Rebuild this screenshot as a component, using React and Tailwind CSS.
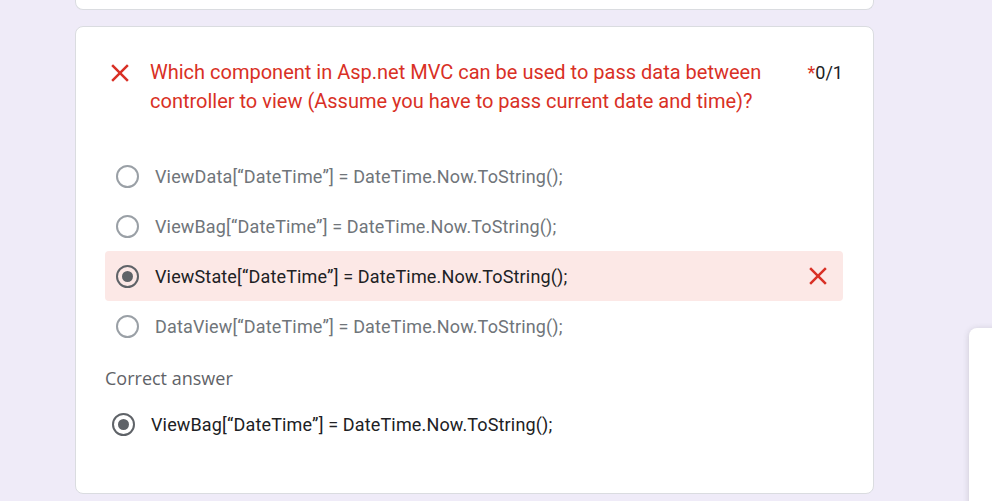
const font = { fontFamily: 'Roboto, "Liberation Sans", sans-serif' };
const labelFont = { fontFamily: '"Open Sans", Roboto, sans-serif' };

const CloseIcon = ({ className }) => (
  <svg viewBox="0 0 24 24" className={className} fill="currentColor">
    <path d="M19 6.41L17.59 5 12 10.59 6.41 5 5 6.41 10.59 12 5 17.59 6.41 19 12 13.41 17.59 19 19 17.59 13.41 12z" />
  </svg>
);

const Radio = ({ checked }) => (
  <div
    className={
      'w-[23px] h-[23px] rounded-full border-2 flex items-center justify-center shrink-0 ' +
      (checked ? 'border-[#5f6368]' : 'border-[#9aa0a6]')
    }
  >
    {checked && <div className="w-[11px] h-[11px] rounded-full bg-[#5f6368]" />}
  </div>
);

const options = [
  { label: 'ViewData[“DateTime”] = DateTime.Now.ToString();' },
  { label: 'ViewBag[“DateTime”] = DateTime.Now.ToString();' },
  { label: 'ViewState[“DateTime”] = DateTime.Now.ToString();', chosen: true },
  { label: 'DataView[“DateTime”] = DateTime.Now.ToString();' }
];

export default function App() {
  return (
    <div className="relative w-full h-[501px] overflow-hidden bg-[#efebf8]" style={font}>
      <div className="ml-[75px] w-[799px]">
        <div className="h-[10px] bg-white border border-t-0 border-[#dadce0] rounded-b-lg" />

        <div className="mt-[16px] h-[468px] bg-white border border-[#dadce0] rounded-lg pl-[29px] pr-[30px] pt-[31px]">
          <div className="flex items-start">
            <CloseIcon className="w-[30px] h-[30px] text-[#d93025] shrink-0" />
            <div className="ml-[15px] w-[630px] text-[20px] leading-[29px] text-[#d93025]">
              Which component in Asp.net MVC can be used to pass data between controller to view (Assume you have to pass current date and time)?
            </div>
            <div className="ml-auto text-[18px] leading-[29px] text-[#202124]">
              <span className="text-[#d93025]">*</span>0/1
            </div>
          </div>

          <div className="mt-[35px] flex flex-col">
            {options.map((o) => (
              <div
                key={o.label}
                className={
                  'h-[50px] flex items-center pl-[11px] pr-[10px] rounded ' +
                  (o.chosen ? 'bg-[#fce8e6]' : '')
                }
              >
                <Radio checked={o.chosen} />
                <span
                  className={
                    'ml-[16px] text-[18px] tracking-[0.15px] ' +
                    (o.chosen ? 'text-[#202124]' : 'text-[#70757a]')
                  }
                >
                  {o.label}
                </span>
                {o.chosen && <CloseIcon className="ml-auto w-[30px] h-[30px] text-[#d93025]" />}
              </div>
            ))}
          </div>

          <div className="mt-[15px] text-[18px] leading-[24px] font-medium text-[#5f6368]" style={labelFont}>
            Correct answer
          </div>

          <div className="mt-[9px] h-[50px] flex items-center pl-[7px]">
            <Radio checked />
            <span className="ml-[16px] text-[18px] tracking-[0.15px] text-[#202124]">
              ViewBag[“DateTime”] = DateTime.Now.ToString();
            </span>
          </div>
        </div>
      </div>

      <div className="absolute left-[969px] top-[328px] w-[60px] h-[220px] bg-white rounded-tl-lg shadow-[0_1px_6px_rgba(60,64,67,0.2)]" />
    </div>
  );
}
